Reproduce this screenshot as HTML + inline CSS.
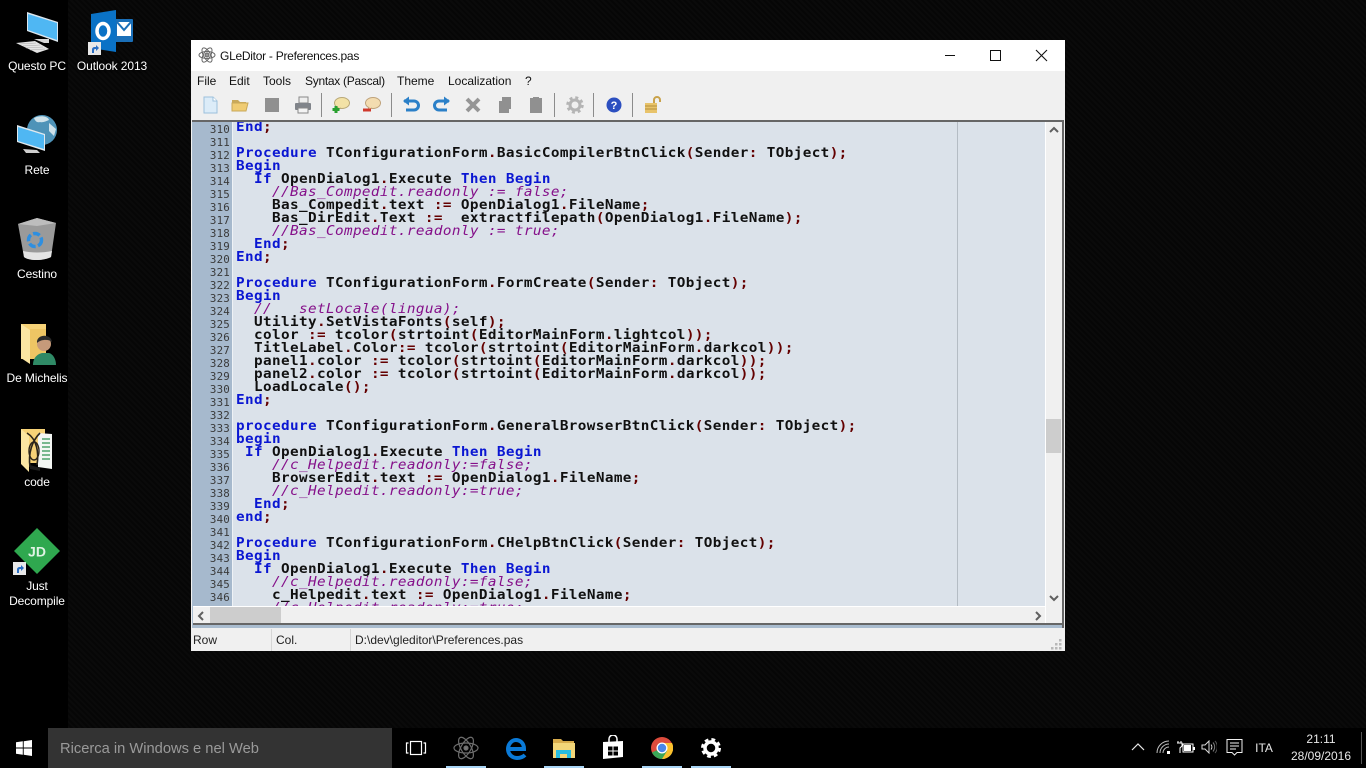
<!DOCTYPE html>
<html lang="it"><head><meta charset="utf-8"><title>GLeDitor - Preferences.pas</title>
<style>
html,body{margin:0;padding:0;width:1366px;height:768px;overflow:hidden;background:#000}
*{box-sizing:border-box}
body{position:relative;font-family:"Liberation Sans",sans-serif;font-size:12px;color:#000}
.a{position:absolute}
#bg{left:0;top:0;width:1366px;height:768px;background:repeating-linear-gradient(45deg,#0a0a0a 0 2px,#060606 2px 4px)}
#bgl{left:0;top:0;width:68px;height:768px;background:#000}
.dl{position:absolute;width:90px;text-align:center;color:#fff;font-size:12px;line-height:15px;letter-spacing:-.1px;text-shadow:0 1px 2px #000}
#win{left:191px;top:40px;width:874px;height:611px;background:#f0f0f0}
#tb{left:0;top:0;width:874px;height:31px;background:#fff}
.m{position:absolute;top:34px;line-height:14px;color:#111}
.sep{position:absolute;top:53px;width:1px;height:24px;background:#8c8c8c}
.ic{position:absolute;top:55px;width:20px;height:20px}
#frame{position:absolute;left:1px;top:80px;width:872px;height:508px;background:#a9bccf;border-top:2px solid #666}
#frame:after{content:"";position:absolute;right:0;top:0;width:2px;height:506px;background:#666}
#ed{position:absolute;left:1px;top:0;width:852px;height:484px;background:#dbe2ea;overflow:hidden}
#gut{position:absolute;left:0;top:0;width:39px;height:484px;background:#a6b9cd}
#wl{position:absolute;left:39px;top:0;width:1px;height:484px;background:#eef2f6}
#nums{position:absolute;left:0;top:1px;width:37px;text-align:right;margin:0;font:10.8px/13px "DejaVu Sans Mono",monospace;letter-spacing:.2px;color:#3a3a3a}
#code{position:absolute;left:43px;top:-1px;margin:0;font:bold 13px/13px "DejaVu Sans Mono",monospace;letter-spacing:.35px;color:#101010;white-space:pre;transform:scaleX(1.1);transform-origin:0 0}
#code b{color:#0a16d2}
#code u{text-decoration:none;color:#640000}
#code i{font-weight:normal;color:#85108a}
#mg{position:absolute;left:764px;top:0;width:1px;height:484px;background:#b4bcc4}
#vs{position:absolute;left:853px;top:0;width:17px;height:501px;background:#f0f0f0;border-left:1px solid #fff}
#hs{position:absolute;left:1px;top:484px;width:852px;height:17px;background:#f0f0f0;border-top:1px solid #fff}
#hb{position:absolute;left:1px;top:501px;width:869px;height:2px;background:#666}
.st{position:absolute;top:593px;line-height:14px;color:#222}
.sd{position:absolute;top:589px;width:1px;height:22px;background:#d6d6d6}
#task{left:0;top:728px;width:1366px;height:40px;background:#000}
#sb{position:absolute;left:48px;top:0;width:344px;height:40px;background:#333;color:#9a9a9a;font-size:14.7px;line-height:42px;padding-left:12px}
.ul{position:absolute;top:38px;height:2px;width:40px;background:#a9d5f5}
.tr{position:absolute;color:#e8e8e8;font-size:12px;text-align:center}
</style></head><body>
<div class="a" id="bg"></div><div class="a" id="bgl"></div>

<!-- Desktop icons -->
<svg class="a" style="left:14px;top:10px" width="46" height="46" viewBox="0 0 46 46"><path d="M13 2L44 12V32L13 21Z" fill="#dbe6ee"/><path d="M14 4L43 13V30L14 20Z" fill="#4fb7f3"/><path d="M20 29L35 29V33L30 33Z" fill="#d8d8d8"/><path d="M2 33L21 31L35 39L23 43Z" fill="#e4e4e4"/><path d="M6 34L22 33M9 36L26 35M12 38L29 37M16 40L31 39" stroke="#a8a8a8" stroke-width=".6"/></svg>
<svg class="a" style="left:90px;top:9px" width="44" height="46" viewBox="0 0 44 46"><rect x="24" y="10" width="19" height="23" rx="1" fill="#1a6fb8"/><path d="M27 13h14v14H27z" fill="#fff"/><path d="M27 13L34 21L41 13" fill="none" stroke="#1a6fb8" stroke-width="2"/><path d="M1 5L26 1V43L1 39Z" fill="#0a72c6"/><ellipse cx="13" cy="22" rx="6" ry="7.500" fill="none" stroke="#fff" stroke-width="3.500"/></svg>
<svg class="a" style="left:88px;top:42px" width="13" height="13" viewBox="0 0 13 13"><rect width="13" height="13" fill="#e8e8e8"/><path d="M4 11V7.500C4 6 5 5 7 5H8V3L11 6L8 9V7H7C6 7 6 8 6 11Z" fill="#2a6fc4"/></svg>
<svg class="a" style="left:16px;top:114px" width="44" height="42" viewBox="0 0 44 42"><circle cx="26" cy="16" r="15" fill="#4e93b8"/><path d="M18 4c6-3 14-2 15 2-3 1-6 3-9 2-3 1-5-1-6-4zM33 9l7 6-2 7-5-5z" fill="#cfe2ea"/><path d="M1 11L29 20V37L1 28Z" fill="#dfe8ee"/><path d="M2 13L28 21V35L2 27Z" fill="#4fb7f3"/><path d="M7 35l14 1 3 3H10z" fill="#cfcfcf"/></svg>
<svg class="a" style="left:17px;top:217px" width="40" height="44" viewBox="0 0 40 44"><path d="M1 7L20 1L39 6L34 40C26 44 12 44 7 40Z" fill="#9a9a9a"/><path d="M1 7L20 1L39 6L20 9Z" fill="#bdbdbd"/><path d="M6 34C14 36 26 36 35 34L34 40C26 44 12 44 7 40Z" fill="#e4e4e4"/><circle cx="18" cy="23" r="6.500" fill="none" stroke="#2f8fe0" stroke-width="3.500" stroke-dasharray="7 2.500"/></svg>
<svg class="a" style="left:20px;top:323px" width="38" height="44" viewBox="0 0 38 44"><path d="M1 1H26V36H1Z" fill="#f6d277"/><path d="M1 1L10 7V41L1 35Z" fill="#fbe6a2"/><path d="M10 6H26V36H10Z" fill="#eec564"/><path d="M13 42C13 34 18 31 22 30H29C33 31 36 36 36 42Z" fill="#2f8a66"/><circle cx="24" cy="21" r="7" fill="#c69a7a"/><path d="M17 20c-1-9 14-10 15-1-3-3-11-3-15 1z" fill="#2b2b2b"/></svg>
<svg class="a" style="left:20px;top:427px" width="34" height="46" viewBox="0 0 34 46"><path d="M1 2H25V36H1Z" fill="#f6d277"/><path d="M1 2L9 9V45L1 37Z" fill="#fbe6a2"/><path d="M18 6L32 7V42L18 40Z" fill="#f3f6f3"/><path d="M22 12h8M22 16h8M22 20h8M22 24h8M22 28h8M22 32h8" stroke="#4fa36c" stroke-width="1.600"/><path d="M7 6c10 6 12 20 10 32M20 6C12 14 8 26 10 40" fill="none" stroke="#2a241a" stroke-width="1.600"/><ellipse cx="14" cy="24" rx="5" ry="9" fill="none" stroke="#2a241a" stroke-width="1.400"/><path d="M10 38l10 3v3l-10-2z" fill="#1c1c1c"/></svg>
<svg class="a" style="left:13px;top:528px" width="48" height="46" viewBox="0 0 48 46"><path d="M24 0L47 23L24 46L1 23Z" fill="#2fa84f"/><text x="24" y="28.500" text-anchor="middle" font-family="Liberation Sans" font-weight="bold" font-size="14" fill="#dff3e4">JD</text></svg>
<svg class="a" style="left:13px;top:562px" width="13" height="13" viewBox="0 0 13 13"><rect width="13" height="13" fill="#e8e8e8"/><path d="M4 11V7.500C4 6 5 5 7 5H8V3L11 6L8 9V7H7C6 7 6 8 6 11Z" fill="#2a6fc4"/></svg>

<div class="dl" style="left:-8px;top:59px">Questo PC</div>
<div class="dl" style="left:67px;top:59px">Outlook 2013</div>
<div class="dl" style="left:-8px;top:163px">Rete</div>
<div class="dl" style="left:-8px;top:267px">Cestino</div>
<div class="dl" style="left:-8px;top:371px">De Michelis</div>
<div class="dl" style="left:-8px;top:475px">code</div>
<div class="dl" style="left:-8px;top:579px">Just<br>Decompile</div>

<!-- Window -->
<div class="a" id="win">
<div class="a" id="tb"></div>
<svg class="a" style="left:7px;top:6px" width="18" height="18" viewBox="0 0 18 18" fill="none" stroke="#666" stroke-width="1"><ellipse cx="9" cy="9" rx="8" ry="3.500"/><ellipse cx="9" cy="9" rx="8" ry="3.500" transform="rotate(60 9 9)"/><ellipse cx="9" cy="9" rx="8" ry="3.500" transform="rotate(120 9 9)"/><circle cx="9" cy="9" r="2" fill="#999"/></svg>
<div class="a" style="left:29px;top:9px;line-height:14px;color:#111;letter-spacing:-.27px">GLeDitor - Preferences.pas</div>
<svg class="a" style="left:750px;top:6px" width="110" height="20" viewBox="0 0 110 20" fill="none" stroke="#111"><path d="M4 9.500H14"/><rect x="49.500" y="4.500" width="10" height="10"/><path d="M95 4L106 15M106 4L95 15" stroke-width="1.100"/></svg>

<div class="m" style="left:6px">File</div><div class="m" style="left:38px">Edit</div><div class="m" style="left:72px">Tools</div><div class="m" style="left:114px;letter-spacing:-.28px">Syntax (Pascal)</div><div class="m" style="left:206px">Theme</div><div class="m" style="left:257px">Localization</div><div class="m" style="left:334px">?</div>

<!-- Toolbar -->
<svg class="ic" style="left:9px" viewBox="0 0 20 20"><path d="M4 2H13L17 6V18H4Z" fill="#dcecf8" stroke="#9cc0dc"/><path d="M13 2V6H17" fill="#fff" stroke="#9cc0dc"/></svg>
<svg class="ic" style="left:39px" viewBox="0 0 20 20"><path d="M2 5H8L10 7H16V9H2Z" fill="#c9a95a"/><path d="M2 8H18L16 16H2Z" fill="#f0cc73" stroke="#c9a95a"/></svg>
<svg class="ic" style="left:71px" viewBox="0 0 20 20"><rect x="3" y="3" width="14" height="14" fill="#909090"/></svg>
<svg class="ic" style="left:102px" viewBox="0 0 20 20"><rect x="6" y="2" width="9" height="6" fill="#eee" stroke="#888"/><rect x="2" y="8" width="16" height="7" rx="1" fill="#80848a"/><rect x="5" y="13" width="10" height="5" fill="#f4f4f4" stroke="#888"/></svg>
<div class="sep" style="left:130px"></div>
<svg class="ic" style="left:140px" viewBox="0 0 20 20"><ellipse cx="11" cy="8" rx="7.500" ry="5.500" fill="#f3e2a6" stroke="#b9a877"/><path d="M7 12l-1 3 4-2" fill="#f3e2a6" stroke="#b9a877"/><path d="M5 11v7M1.500 14.500h7" stroke="#2aa12f" stroke-width="3"/></svg>
<svg class="ic" style="left:171px" viewBox="0 0 20 20"><ellipse cx="11" cy="8" rx="7.500" ry="5.500" fill="#f3dcb0" stroke="#bfa27a"/><path d="M7 12l-1 3 4-2" fill="#f3dcb0" stroke="#bfa27a"/><path d="M1 15h8" stroke="#d0392b" stroke-width="3"/></svg>
<div class="sep" style="left:200px"></div>
<svg class="ic" style="left:210px" viewBox="0 0 20 20" fill="none"><path d="M3 6H13A4.500 4.500 0 0 1 13 15H5" stroke="#2b80c8" stroke-width="3"/><path d="M8 1.500L2 6L8 10.500Z" fill="#2b80c8"/></svg>
<svg class="ic" style="left:241px" viewBox="0 0 20 20" fill="none"><path d="M17 6H7A4.500 4.500 0 0 0 7 15H15" stroke="#2b80c8" stroke-width="3"/><path d="M12 1.500L18 6L12 10.500Z" fill="#2b80c8"/></svg>
<svg class="ic" style="left:272px" viewBox="0 0 20 20"><path d="M4 4L16 16M16 4L4 16" stroke="#959595" stroke-width="4"/></svg>
<svg class="ic" style="left:304px" viewBox="0 0 20 20"><path d="M7 2H16V14H14V18H4V6H7Z" fill="#909090"/></svg>
<svg class="ic" style="left:335px" viewBox="0 0 20 20"><path d="M4 3H7V2H13V3H16V18H4Z" fill="#909090"/></svg>
<div class="sep" style="left:363px"></div>
<svg class="ic" style="left:374px" viewBox="0 0 20 20"><circle cx="10" cy="10" r="5" fill="none" stroke="#b4b4b4" stroke-width="3"/><circle cx="10" cy="10" r="7.500" fill="none" stroke="#b4b4b4" stroke-width="2.500" stroke-dasharray="3 2.900"/></svg>
<div class="sep" style="left:402px"></div>
<svg class="ic" style="left:413px" viewBox="0 0 20 20"><circle cx="10" cy="10" r="7.500" fill="#2c4fc0"/><text x="10" y="14" text-anchor="middle" font-family="Liberation Sans" font-weight="bold" font-size="11" fill="#fff">?</text></svg>
<div class="sep" style="left:441px"></div>
<svg class="ic" style="left:451px" viewBox="0 0 20 20"><path d="M12 8V5A3 3 0 0 1 18 5V7" fill="none" stroke="#c9a24a" stroke-width="2"/><rect x="3" y="8" width="12" height="10" fill="#e8c36a"/><path d="M3 11h12M3 14h12" stroke="#b48f3c"/></svg>

<!-- Editor -->
<div id="frame">
 <div id="ed">
  <div id="gut"></div><div id="wl"></div>
  <pre id="nums">310
311
312
313
314
315
316
317
318
319
320
321
322
323
324
325
326
327
328
329
330
331
332
333
334
335
336
337
338
339
340
341
342
343
344
345
346
347</pre>
  <div id="mg"></div>
<pre id="code"><b>End</b><u>;</u>

<b>Procedure</b> TConfigurationForm<u>.</u>BasicCompilerBtnClick<u>(</u>Sender<u>:</u> TObject<u>);</u>
<b>Begin</b>
  <b>If</b> OpenDialog1<u>.</u>Execute <b>Then Begin</b>
    <i>//Bas_Compedit.readonly := false;</i>
    Bas_Compedit<u>.</u>text <u>:=</u> OpenDialog1<u>.</u>FileName<u>;</u>
    Bas_DirEdit<u>.</u>Text <u>:=</u>  extractfilepath<u>(</u>OpenDialog1<u>.</u>FileName<u>);</u>
    <i>//Bas_Compedit.readonly := true;</i>
  <b>End</b><u>;</u>
<b>End</b><u>;</u>

<b>Procedure</b> TConfigurationForm<u>.</u>FormCreate<u>(</u>Sender<u>:</u> TObject<u>);</u>
<b>Begin</b>
  <i>//   setLocale(lingua);</i>
  Utility<u>.</u>SetVistaFonts<u>(</u>self<u>);</u>
  color <u>:=</u> tcolor<u>(</u>strtoint<u>(</u>EditorMainForm<u>.</u>lightcol<u>));</u>
  TitleLabel<u>.</u>Color<u>:=</u> tcolor<u>(</u>strtoint<u>(</u>EditorMainForm<u>.</u>darkcol<u>));</u>
  panel1<u>.</u>color <u>:=</u> tcolor<u>(</u>strtoint<u>(</u>EditorMainForm<u>.</u>darkcol<u>));</u>
  panel2<u>.</u>color <u>:=</u> tcolor<u>(</u>strtoint<u>(</u>EditorMainForm<u>.</u>darkcol<u>));</u>
  LoadLocale<u>();</u>
<b>End</b><u>;</u>

<b>procedure</b> TConfigurationForm<u>.</u>GeneralBrowserBtnClick<u>(</u>Sender<u>:</u> TObject<u>);</u>
<b>begin</b>
 <b>If</b> OpenDialog1<u>.</u>Execute <b>Then Begin</b>
    <i>//c_Helpedit.readonly:=false;</i>
    BrowserEdit<u>.</u>text <u>:=</u> OpenDialog1<u>.</u>FileName<u>;</u>
    <i>//c_Helpedit.readonly:=true;</i>
  <b>End</b><u>;</u>
<b>end</b><u>;</u>

<b>Procedure</b> TConfigurationForm<u>.</u>CHelpBtnClick<u>(</u>Sender<u>:</u> TObject<u>);</u>
<b>Begin</b>
  <b>If</b> OpenDialog1<u>.</u>Execute <b>Then Begin</b>
    <i>//c_Helpedit.readonly:=false;</i>
    c_Helpedit<u>.</u>text <u>:=</u> OpenDialog1<u>.</u>FileName<u>;</u>
    <i>//c_Helpedit.readonly:=true;</i></pre>
 </div>
 <div id="vs">
  <svg class="a" style="left:0;top:2px" width="16" height="12" viewBox="0 0 16 12"><path d="M4 8L8 4L12 8" fill="none" stroke="#606060" stroke-width="2"/></svg>
  <div class="a" style="left:0;top:297px;width:15px;height:34px;background:#cdcdcd"></div>
  <svg class="a" style="left:0;top:470px" width="16" height="12" viewBox="0 0 16 12"><path d="M4 4L8 8L12 4" fill="none" stroke="#606060" stroke-width="2"/></svg>
 </div>
 <div id="hs">
  <svg class="a" style="left:2px;top:2px" width="12" height="14" viewBox="0 0 12 14"><path d="M8 3L4 7L8 11" fill="none" stroke="#606060" stroke-width="2"/></svg>
  <div class="a" style="left:17px;top:0;width:71px;height:16px;background:#cdcdcd"></div>
  <svg class="a" style="left:839px;top:2px" width="12" height="14" viewBox="0 0 12 14"><path d="M4 3L8 7L4 11" fill="none" stroke="#606060" stroke-width="2"/></svg>
 </div>
 <div id="hb"></div>
</div>

<div class="st" style="left:2px">Row</div><div class="sd" style="left:80px"></div>
<div class="st" style="left:85px">Col.</div><div class="sd" style="left:159px"></div>
<div class="st" style="left:164px">D:\dev\gleditor\Preferences.pas</div>
<svg class="a" style="left:860px;top:598px" width="12" height="12" viewBox="0 0 12 12" fill="#b8b8b8"><rect x="8" y="1" width="2.500" height="2.500"/><rect x="4" y="5" width="2.500" height="2.500"/><rect x="8" y="5" width="2.500" height="2.500"/><rect x="0" y="9" width="2.500" height="2.500"/><rect x="4" y="9" width="2.500" height="2.500"/><rect x="8" y="9" width="2.500" height="2.500"/></svg>
</div>

<!-- Taskbar -->
<div class="a" id="task">
 <svg class="a" style="left:16px;top:12px" width="16" height="16" viewBox="0 0 16 16" fill="#fff"><path d="M0 2.300L6.800 1.300V7.500H0ZM7.700 1.200L16 0V7.500H7.700ZM0 8.500H6.800V14.700L0 13.700ZM7.700 8.500H16V16L7.700 14.800Z"/></svg>
 <div id="sb">Ricerca in Windows e nel Web</div>
 <svg class="a" style="left:405px;top:11px" width="22" height="18" viewBox="0 0 22 18" fill="none" stroke="#fff" stroke-width="1.200"><rect x="5.500" y="2.500" width="11" height="13"/><path d="M3.500 4H1.500V14H3.500M18.500 4H20.500V14H18.500"/></svg>
 <svg class="a" style="left:453px;top:7px" width="26" height="26" viewBox="0 0 26 26" fill="none" stroke="#6d6d6d" stroke-width="1.200"><ellipse cx="13" cy="13" rx="12" ry="5"/><ellipse cx="13" cy="13" rx="12" ry="5" transform="rotate(60 13 13)"/><ellipse cx="13" cy="13" rx="12" ry="5" transform="rotate(120 13 13)"/><circle cx="13" cy="13" r="2" fill="#777"/></svg>
 <svg class="a" style="left:505px;top:9px" width="22" height="24" viewBox="0 0 22 24" fill="none"><path d="M4 12H19C19 5 14 3 11 3C6 3 3 8 3 12C3 18 8 21 12 21C15 21 18 20 20 18" stroke="#0a7ad8" stroke-width="4"/></svg>
 <svg class="a" style="left:553px;top:10px" width="22" height="22" viewBox="0 0 22 22"><path d="M0 1H8L10 3H21V8H0Z" fill="#d8ac4c"/><rect x="0" y="5" width="22" height="15" fill="#f3d679"/><path d="M3 20V12H18V20H14V16H7V20Z" fill="#28bde0"/></svg>
 <svg class="a" style="left:602px;top:7px" width="22" height="25" viewBox="0 0 22 25"><path d="M7 7V4A4 4 0 0 1 15 4V7" fill="none" stroke="#fff" stroke-width="1.500"/><path d="M1 7L21 6V22L1 24Z" fill="#fff"/><path d="M6 11.500H10.500V15.500H6ZM11.500 11.500H16V15.500H11.500ZM6 16.500H10.500V20.500H6ZM11.500 16.500H16V20.500H11.500Z" fill="#000"/></svg>
 <svg class="a" style="left:651px;top:9px" width="22" height="22" viewBox="0 0 22 22"><circle cx="11" cy="11" r="11" fill="#dd4b3c"/><path d="M11 11L21 16A11 11 0 0 1 11 22A11 11 0 0 1 1 15.500Z" fill="#3aa757"/><path d="M11 6H21A11 11 0 0 1 11 22L16 14Z" fill="#fbc02d"/><circle cx="11" cy="11" r="5.500" fill="#fff"/><circle cx="11" cy="11" r="4.200" fill="#4a86e8"/></svg>
 <svg class="a" style="left:700px;top:9px" width="22" height="22" viewBox="0 0 22 22"><circle cx="11" cy="11" r="6" fill="none" stroke="#fff" stroke-width="3.500"/><circle cx="11" cy="11" r="8.500" fill="none" stroke="#fff" stroke-width="3" stroke-dasharray="3.700 3"/></svg>
 <div class="ul" style="left:446px"></div><div class="ul" style="left:544px"></div><div class="ul" style="left:642px"></div><div class="ul" style="left:691px"></div>

 <svg class="a" style="left:1131px;top:14px" width="14" height="10" viewBox="0 0 14 10"><path d="M1 8L7 2L13 8" fill="none" stroke="#e8e8e8" stroke-width="1.200"/></svg>
 <svg class="a" style="left:1156px;top:12px" width="15" height="14" viewBox="0 0 15 14" fill="none" stroke="#bdbdbd"><path d="M1 13A12 12 0 0 1 13 1M4 13A9 9 0 0 1 13 4M7 13A6 6 0 0 1 13 7"/><rect x="11" y="11" width="3" height="3" fill="#fff" stroke="none"/></svg>
 <svg class="a" style="left:1177px;top:12px" width="18" height="14" viewBox="0 0 18 14"><path d="M1 1V3M4 1V3M0 3H5V6L3 8V13" fill="none" stroke="#fff"/><rect x="6" y="4" width="10" height="8" fill="none" stroke="#fff"/><rect x="7" y="5" width="7" height="6" fill="#fff"/><rect x="16" y="7" width="2" height="3" fill="#fff"/></svg>
 <svg class="a" style="left:1201px;top:12px" width="16" height="14" viewBox="0 0 16 14" fill="none" stroke="#ddd"><path d="M1 5H4L8 1V13L4 9H1Z"/><path d="M10 4.500A4 4 0 0 1 10 9.500"/><path d="M12 2.500A7 7 0 0 1 12 11.500" stroke="#777"/><path d="M14 1A9 9 0 0 1 14 13" stroke="#555"/></svg>
 <svg class="a" style="left:1226px;top:10px" width="17" height="19" viewBox="0 0 17 19" fill="none" stroke="#f0f0f0"><path d="M1 1.500H16V14.500H11L8.500 17L6 14.500H1Z"/><path d="M4 5H13M4 8H13M4 11H10"/></svg>
 <div class="tr" style="left:1250px;top:13px;width:28px;line-height:14px">ITA</div>
 <div class="tr" style="left:1285px;top:3px;width:72px;line-height:17px">21:11<br>28/09/2016</div>
 <div class="a" style="left:1361px;top:4px;width:1px;height:32px;background:#555"></div>
</div>
</body></html>
